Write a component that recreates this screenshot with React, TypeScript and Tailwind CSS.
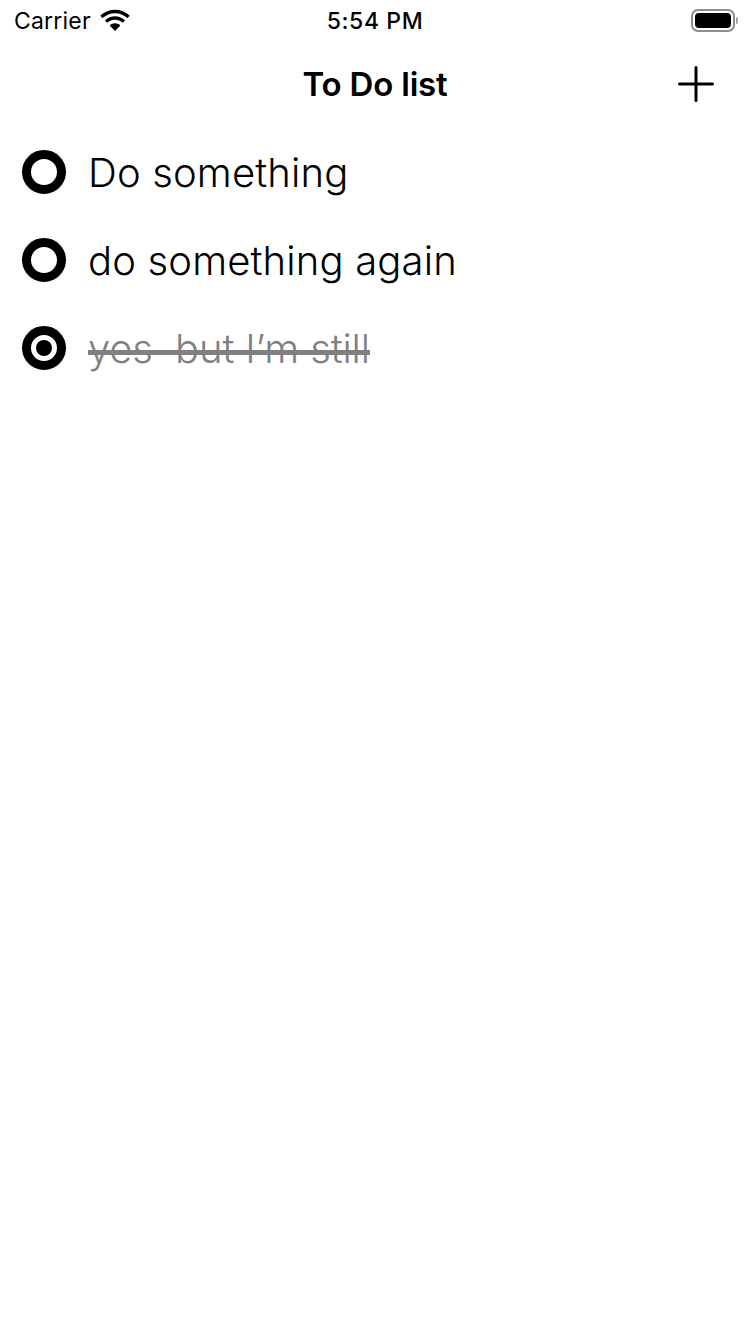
import React from 'react';

const todos = [
  { id: 1, label: 'Do something', done: false },
  { id: 2, label: 'do something again', done: false },
  { id: 3, label: 'yes\u00A0 but I’m still', done: true },
];

function StatusBar() {
  return (
    <div className="relative flex h-10 items-center justify-between pl-[14px] pr-[12px]">
      <div className="flex items-center gap-[9px]">
        <span className="pt-[2px] text-[23px] leading-none tracking-[0.2px] text-black">Carrier</span>
        <svg width="30" height="22" viewBox="0 0 30 22" fill="black">
          <path d="M15 4.2c4.6 0 8.8 1.7 12 4.6.3.2.6.2.8 0l1.5-1.6c.3-.3.3-.7 0-1C25.600 2.700 20.500.7 15 .7S4.400 2.700.700 6.200c-.3.3-.3.7 0 1l1.500 1.600c.2.2.6.2.8 0 3.200-2.900 7.400-4.600 12-4.600z" />
          <path d="M15 10.800c2.800 0 5.300 1 7.300 2.800.3.200.6.200.8 0l1.500-1.600c.3-.3.3-.7 0-1-2.500-2.300-6-3.700-9.600-3.700s-7.100 1.400-9.600 3.700c-.3.300-.3.700 0 1l1.500 1.600c.2.200.6.200.8 0 2-1.800 4.500-2.800 7.300-2.800z" />
          <path d="M15 14.300c-1.900 0-3.600.7-4.900 1.800-.3.300-.3.700 0 1l4.400 4.500c.3.300.7.300 1 0l4.400-4.500c.3-.3.3-.7 0-1-1.300-1.100-3-1.800-4.900-1.800z" />
        </svg>
      </div>
      <span className="absolute left-0 right-0 pt-[2px] text-center text-[23px] font-medium leading-none tracking-[0.6px] text-black">
        5:54 PM
      </span>
      <div className="flex items-center">
        <div className="flex h-[23px] w-[44px] items-center justify-center rounded-[7px] border-[2px] border-[#8e8e8e]">
          <div className="h-[15px] w-[36px] rounded-[4px] bg-black" />
        </div>
        <div className="ml-[1px] h-[7px] w-[2px] rounded-r-sm bg-[#a0a0a0]" />
      </div>
    </div>
  );
}

function NavBar() {
  return (
    <div className="relative flex h-[88px] items-center justify-center">
      <h1 className="pt-[1px] text-[33px] font-semibold leading-none tracking-[-0.2px] text-black">To Do list</h1>
      <button type="button" className="absolute right-[36px] top-[26px]" aria-label="Add">
        <svg width="36" height="36" viewBox="0 0 36 36" stroke="black" strokeWidth="3" strokeLinecap="round">
          <path d="M18 1.500v33M1.500 18h33" />
        </svg>
      </button>
    </div>
  );
}

function TodoRow({ label, done }: { label: string; done: boolean }) {
  return (
    <li className="flex h-[88px] items-center gap-[22px] pl-[22px]">
      <div className="flex h-11 w-11 items-center justify-center rounded-full border-[9px] border-black bg-white">
        {done && <div className="h-[16px] w-[16px] rounded-full bg-black" />}
      </div>
      <span
        className={
          done
            ? 'relative pt-[2px] text-[40px] font-light leading-none tracking-[-0.15px] text-[#808080]'
            : 'pt-[2px] text-[40px] font-light leading-none tracking-[0.15px] text-black'
        }
      >
        {label}
        {done && <span className="absolute left-0 right-0 top-[23px] h-[5px] bg-[#808080]" />}
      </span>
    </li>
  );
}

export default function App() {
  return (
    <div className="h-[1334px] w-[750px] bg-white font-['Inter','Liberation_Sans',sans-serif]">
      <StatusBar />
      <NavBar />
      <ul>
        {todos.map((todo) => (
          <TodoRow key={todo.id} label={todo.label} done={todo.done} />
        ))}
      </ul>
    </div>
  );
}
